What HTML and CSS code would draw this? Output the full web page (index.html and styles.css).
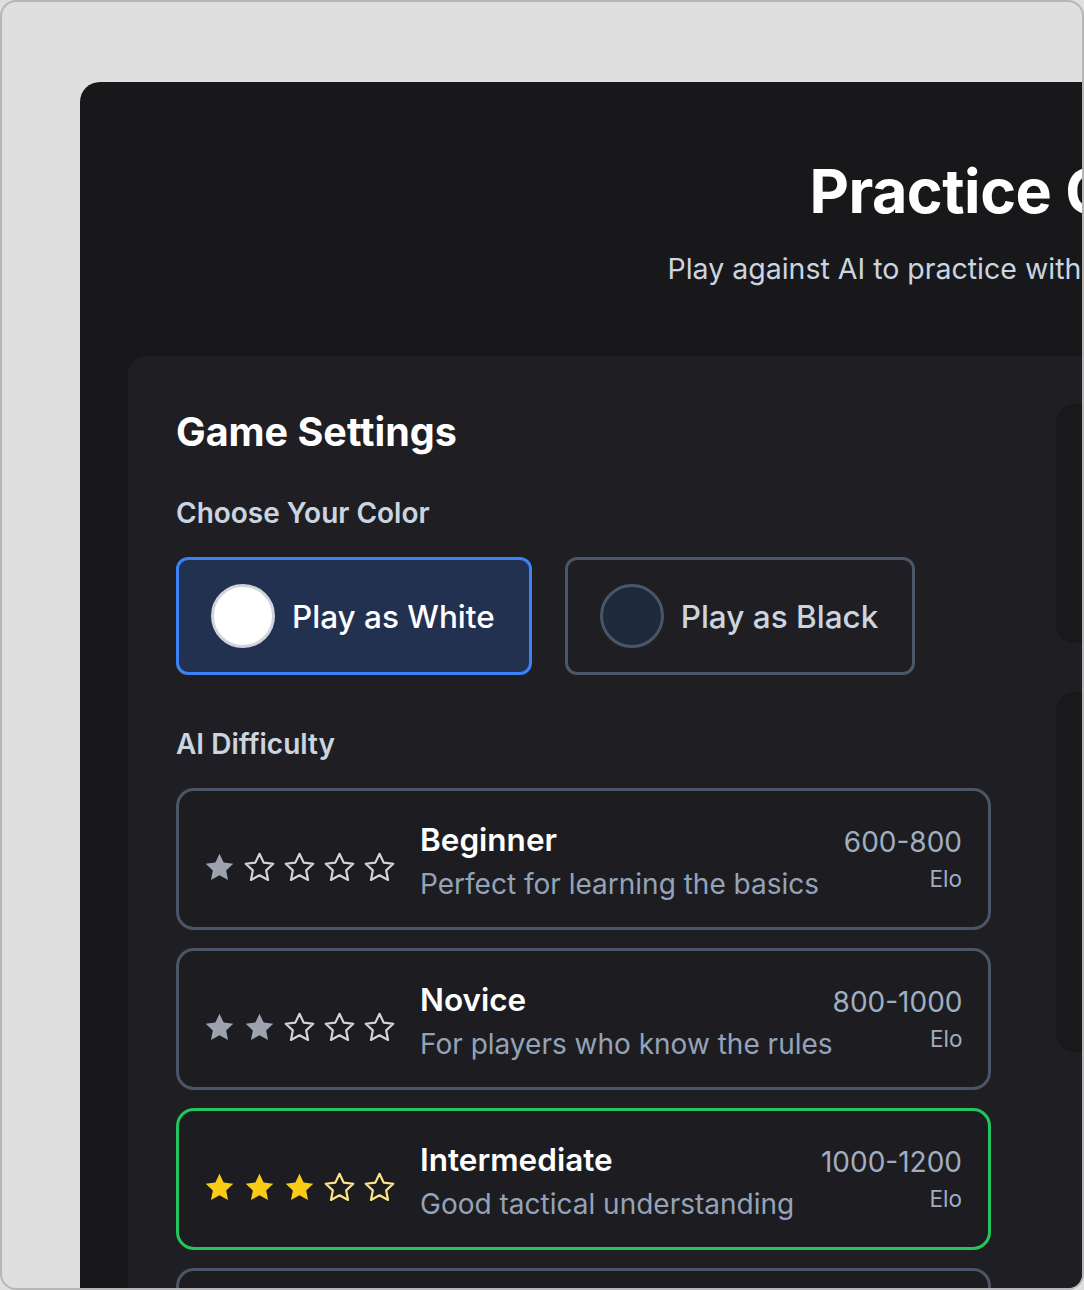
FILE: index.html
```html
<!DOCTYPE html>
<html lang="en">
<head>
  <meta charset="UTF-8">
  <meta name="viewport" content="width=device-width, initial-scale=1.0">
  <title>Practice Chess</title>
  <link rel="stylesheet" href="styles.css">
</head>
<body>
  <svg class="defs" aria-hidden="true">
    <symbol id="star" viewBox="0 0 24 24">
      <path d="M12 2.6l2.85 6.05 6.6.8-4.88 4.55 1.28 6.55L12 17.3l-5.85 3.25 1.28-6.55L2.55 9.45l6.6-.8z"/>
    </symbol>
  </svg>

  <div class="frame">
    <div class="panel">
      <header class="page-header">
        <h1>Practice Chess</h1>
        <p class="subtitle">Play against AI to practice without any rating pressure</p>
      </header>

      <div class="card">
        <section class="settings">
          <h2>Game Settings</h2>

          <h3 class="label">Choose Your Color</h3>
          <div class="color-row">
            <button class="color-btn selected">
              <span class="dot white"></span>
              Play as White
            </button>
            <button class="color-btn">
              <span class="dot black"></span>
              Play as Black
            </button>
          </div>

          <h3 class="label label-ai">AI Difficulty</h3>
          <div class="levels">
            <!-- beginner -->
            <div class="level">
              <div class="stars gray">
                <svg class="star fill"><use href="#star"/></svg>
                <svg class="star line"><use href="#star"/></svg>
                <svg class="star line"><use href="#star"/></svg>
                <svg class="star line"><use href="#star"/></svg>
                <svg class="star line"><use href="#star"/></svg>
              </div>
              <div class="level-info">
                <div class="level-name">Beginner</div>
                <div class="level-desc">Perfect for learning the basics</div>
              </div>
              <div class="level-elo">
                <div class="elo-range">600-800</div>
                <div class="elo-unit">Elo</div>
              </div>
            </div>

            <!-- novice -->
            <div class="level">
              <div class="stars gray">
                <svg class="star fill"><use href="#star"/></svg>
                <svg class="star fill"><use href="#star"/></svg>
                <svg class="star line"><use href="#star"/></svg>
                <svg class="star line"><use href="#star"/></svg>
                <svg class="star line"><use href="#star"/></svg>
              </div>
              <div class="level-info">
                <div class="level-name">Novice</div>
                <div class="level-desc">For players who know the rules</div>
              </div>
              <div class="level-elo">
                <div class="elo-range">800-1000</div>
                <div class="elo-unit">Elo</div>
              </div>
            </div>

            <!-- intermediate (selected) -->
            <div class="level active">
              <div class="stars gold">
                <svg class="star fill"><use href="#star"/></svg>
                <svg class="star fill"><use href="#star"/></svg>
                <svg class="star fill"><use href="#star"/></svg>
                <svg class="star line"><use href="#star"/></svg>
                <svg class="star line"><use href="#star"/></svg>
              </div>
              <div class="level-info">
                <div class="level-name">Intermediate</div>
                <div class="level-desc">Good tactical understanding</div>
              </div>
              <div class="level-elo">
                <div class="elo-range">1000-1200</div>
                <div class="elo-unit">Elo</div>
              </div>
            </div>

            <div class="level">
              <div class="stars gray">
                <svg class="star fill"><use href="#star"/></svg>
                <svg class="star fill"><use href="#star"/></svg>
                <svg class="star fill"><use href="#star"/></svg>
                <svg class="star fill"><use href="#star"/></svg>
                <svg class="star line"><use href="#star"/></svg>
              </div>
              <div class="level-info">
                <div class="level-name">Advanced</div>
                <div class="level-desc">Strong positional play</div>
              </div>
              <div class="level-elo">
                <div class="elo-range">1200-1600</div>
                <div class="elo-unit">Elo</div>
              </div>
            </div>
          </div>
        </section>

        <aside class="side">
          <div class="side-box box-top"></div>
          <div class="side-box box-bottom"></div>
        </aside>
      </div>
    </div>
  </div>
</body>
</html>
```

FILE: styles.css
```css
body {
  margin: 0;
  background-color: #dfdfdf;
  font-family: 'Inter', 'Noto Sans', sans-serif;
}

.defs {
  position: absolute;
  width: 0;
  height: 0;
}

.frame {
  width: 1084px;
  height: 1290px;
  box-sizing: border-box;
  border: 2px solid #b6b6b6;
  border-radius: 16px;
  background-color: #dfdfdf;
  overflow: hidden;
  padding: 80px 0 0 78px;
}

.panel {
  width: 1900px;
  min-height: 1400px;
  background-color: #18181b;
  border-radius: 20px 0 0 0;
  padding: 71px 48px 0 48px;
  box-sizing: border-box;
}

.page-header {
  text-align: center;
}

h1 {
  margin: 0;
  font-size: 61px;
  line-height: 76px;
  font-weight: 700;
  color: #ffffff;
  letter-spacing: -0.5px;
}

.subtitle {
  margin: 21px 0 0 0;
  font-size: 28.5px;
  line-height: 38px;
  color: #cbd5e0;
}

.card {
  display: grid;
  grid-template-columns: 815px 420px;
  column-gap: 65px;
  width: max-content;
  margin-top: 68px;
  padding: 48px;
  background-color: #1f1f23;
  border-radius: 18px;
}

h2 {
  margin: 0;
  padding-top: 5px;
  font-size: 39.5px;
  line-height: 46px;
  font-weight: 700;
  color: #ffffff;
}

.label {
  margin: 41px 0 27px 0;
  font-size: 28px;
  line-height: 34px;
  font-weight: 600;
  color: #cbd5e0;
}

.label-ai {
  margin: 52px 0 27px 0;
}

.color-row {
  display: flex;
  gap: 33px;
}

.color-btn {
  display: flex;
  align-items: center;
  gap: 17px;
  height: 118px;
  padding: 0 34px 0 32px;
  box-sizing: border-box;
  border: 3px solid #4a5568;
  border-radius: 12px;
  background-color: transparent;
  color: #cbd5e0;
  font-family: inherit;
  font-size: 31.5px;
  font-weight: 500;
}

.color-btn.selected {
  border-color: #3b82f6;
  background-color: #233150;
  color: #ffffff;
}

.dot {
  width: 64px;
  height: 64px;
  box-sizing: border-box;
  border-radius: 50%;
  border: 3px solid #4a5568;
}

.dot.white {
  background-color: #ffffff;
  border-color: #d1d5db;
}

.dot.black {
  background-color: #1e293b;
}

.levels {
  display: flex;
  flex-direction: column;
  gap: 18px;
}

.level {
  display: flex;
  align-items: center;
  height: 142px;
  box-sizing: border-box;
  padding: 0 26px;
  border: 3px solid #4a5568;
  border-radius: 18px;
  background-color: #1d1d21;
}

.level.active {
  border-color: #22c55e;
}

.stars {
  display: flex;
  gap: 5px;
  margin-top: 16px;
  margin-right: 23px;
  margin-left: -3px;
}

.star {
  width: 35px;
  height: 35px;
}

.star.fill {
  fill: currentColor;
  stroke: none;
}

.star.line {
  fill: none;
  stroke-width: 1.5;
  stroke-linejoin: round;
}

.stars.gray .fill {
  color: #9ca3af;
}

.stars.gray .line {
  stroke: #d1d5db;
}

.stars.gold .fill {
  color: #facc15;
}

.stars.gold .line {
  stroke: #fde68a;
}

.level-info {
  flex: 1;
  margin-top: 4px;
  white-space: nowrap;
}

.level-name {
  font-size: 31.5px;
  line-height: 38px;
  font-weight: 600;
  color: #ffffff;
}

.level-desc {
  margin-top: 8px;
  font-size: 28px;
  line-height: 34px;
  color: #94a3b8;
}

.level-elo {
  text-align: right;
  white-space: nowrap;
}

.elo-range {
  font-size: 28px;
  line-height: 34px;
  color: #a0aec0;
}

.elo-unit {
  margin-top: 6px;
  font-size: 22.5px;
  line-height: 28px;
  color: #a0aec0;
}

.side {
  display: flex;
  flex-direction: column;
  gap: 49px;
}

.side-box {
  background-color: #19191c;
  border-radius: 18px;
}

.box-top {
  height: 239px;
}

.box-bottom {
  height: 360px;
}
```
